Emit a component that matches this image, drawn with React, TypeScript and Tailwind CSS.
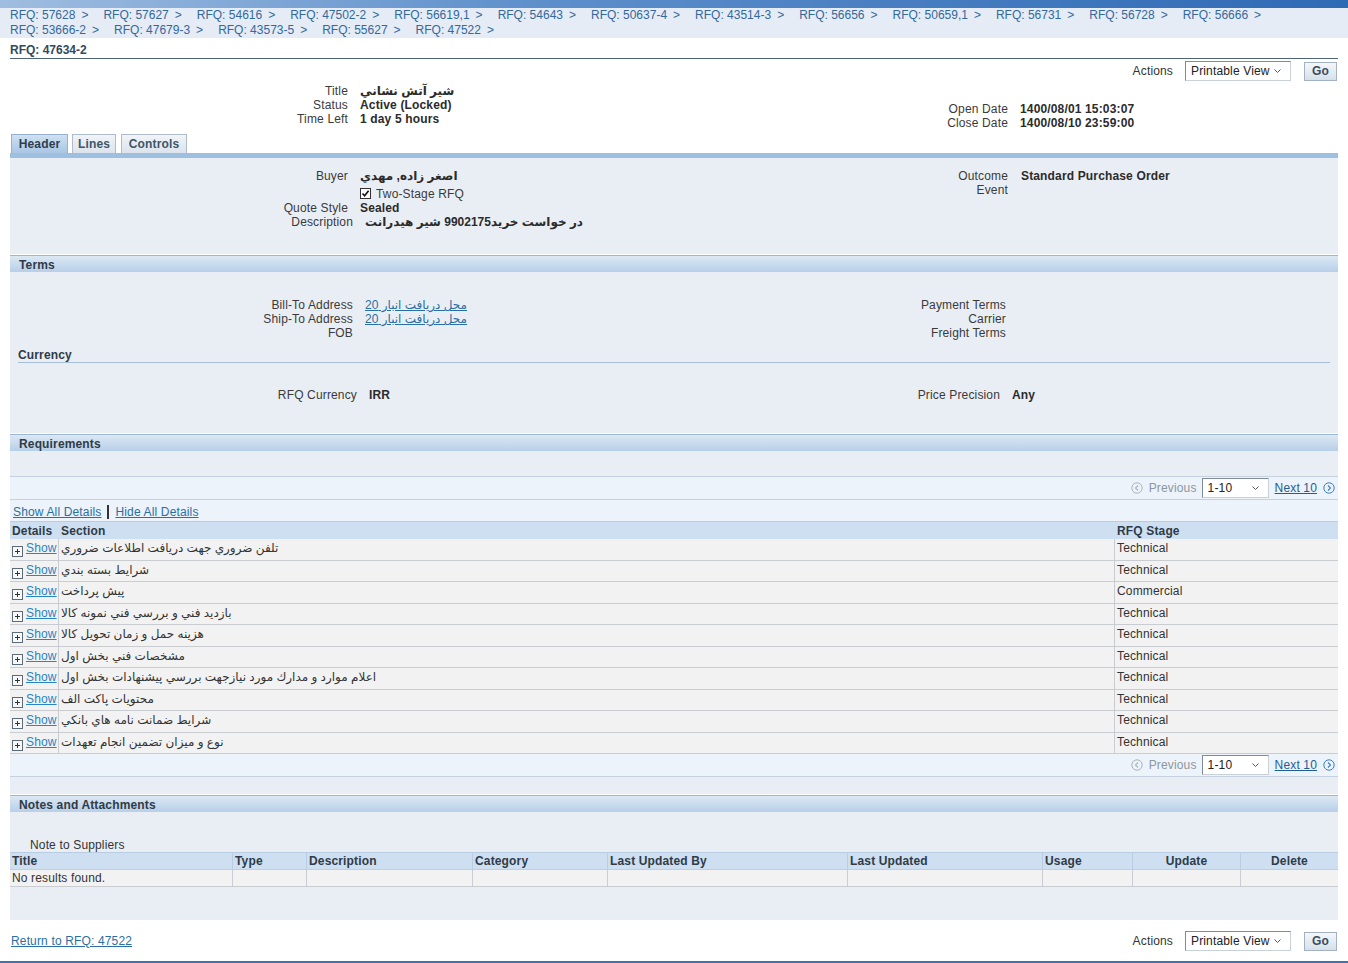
import React from "react";

const crumbs1 = ["RFQ: 57628", "RFQ: 57627", "RFQ: 54616", "RFQ: 47502-2", "RFQ: 56619,1", "RFQ: 54643", "RFQ: 50637-4", "RFQ: 43514-3", "RFQ: 56656", "RFQ: 50659,1", "RFQ: 56731", "RFQ: 56728", "RFQ: 56666"];
const crumbs2 = ["RFQ: 53666-2", "RFQ: 47679-3", "RFQ: 43573-5", "RFQ: 55627", "RFQ: 47522"];

const reqRows: [string, string][] = [
  ["تلفن ضروري جهت دريافت اطلاعات ضروري", "Technical"],
  ["شرايط بسته بندي", "Technical"],
  ["پيش پرداخت", "Commercial"],
  ["بازديد فني و بررسي فني نمونه كالا", "Technical"],
  ["هزينه حمل و زمان تحويل كالا", "Technical"],
  ["مشخصات فني بخش اول", "Technical"],
  ["اعلام موارد و مدارك مورد نيازجهت بررسي پيشنهادات بخش اول", "Technical"],
  ["محتويات پاكت الف", "Technical"],
  ["شرايط ضمانت نامه هاي بانكي", "Technical"],
  ["نوع و ميزان تضمين انجام تعهدات", "Technical"],
];

function Chevron() {
  return (
    <svg width="9" height="6" viewBox="0 0 9 6" className="shrink-0">
      <path d="M1.5 1.5 L4.5 4.5 L7.5 1.5" fill="none" stroke="#555" strokeWidth="1" />
    </svg>
  );
}

function Select({ text, w }: { text: string; w: string }) {
  return (
    <div className={`${w} h-[20px] flex items-center justify-between pl-[5px] pr-[8px] bg-white border border-t-[#7f8b97] border-l-[#7f8b97] border-r-[#c8d0d8] border-b-[#c8d0d8] text-[12px] text-[#222]`}>
      <span>{text}</span>
      <Chevron />
    </div>
  );
}

function Actions() {
  return (
    <div className="flex items-center justify-end pr-[11px] h-[20px]">
      <span className="text-[#333]">Actions</span>
      <div className="ml-[12px]">
        <Select text="Printable View" w="w-[106px]" />
      </div>
      <div className="ml-[13px] w-[33px] h-[19px] flex items-center justify-center border border-[#a3b2c2] bg-[linear-gradient(#f4f7fa,#d6e0ea)] font-bold text-[#3a4c5e]">
        Go
      </div>
    </div>
  );
}

function SectionBar({ title }: { title: string }) {
  return (
    <div className="h-[17px] border-t border-[#9cb7d3] bg-[linear-gradient(#dce8f4,#b7cfe8)] flex items-center pl-[9px] pt-[1px] font-bold text-[#2f3b47]">
      {title}
    </div>
  );
}

function Row({ label, children, lw = "w-[338px]", h = "h-[14px]" }: { label: React.ReactNode; children?: React.ReactNode; lw?: string; h?: string }) {
  return (
    <div className={`flex ${h} items-center`}>
      <div className={`${lw} shrink-0 text-right text-[#3a3a3a]`}>{label}</div>
      <div className="pl-[12px] font-bold text-[#2b2b2b] whitespace-nowrap">{children}</div>
    </div>
  );
}

function PrevIcon({ color }: { color: string }) {
  return (
    <svg width="12" height="12" viewBox="0 0 12 12">
      <circle cx="6" cy="6" r="5.2" fill="none" stroke={color} strokeWidth="1" />
      <path d="M7 3.5 L4.5 6 L7 8.5" fill="none" stroke={color} strokeWidth="1.1" />
    </svg>
  );
}
function NextIcon({ color }: { color: string }) {
  return (
    <svg width="12" height="12" viewBox="0 0 12 12">
      <circle cx="6" cy="6" r="5.2" fill="none" stroke={color} strokeWidth="1" />
      <path d="M5 3.5 L7.5 6 L5 8.5" fill="none" stroke={color} strokeWidth="1.1" />
    </svg>
  );
}

function Pager() {
  return (
    <div className="h-[23px] flex items-center justify-end pr-[3px] bg-[#edf3fa] border-b border-[#c5d1de]">
      <PrevIcon color="#a9b4bf" />
      <span className="ml-[6px] text-[#8e969e]">Previous</span>
      <div className="ml-[5px]">
        <Select text="1-10" w="w-[67px]" />
      </div>
      <span className="ml-[6px] text-[#1f5e96] underline">Next 10</span>
      <span className="ml-[6px]"><NextIcon color="#3f7fc2" /></span>
    </div>
  );
}

function PlusBox() {
  return (
    <svg width="11" height="11" viewBox="0 0 11 11" className="shrink-0 mt-[7px]">
      <rect x="0.5" y="0.5" width="10" height="10" fill="#f6f8fa" stroke="#5d6b78" />
      <path d="M3 5.5 H8 M5.5 3 V8" stroke="#333" strokeWidth="1" />
    </svg>
  );
}

export default function App() {
  return (
    <div className="w-[1348px] h-[963px] bg-white relative overflow-hidden text-[12px] leading-[14px] tracking-[0.15px] text-[#333] font-['Liberation_Sans','DejaVu_Sans',sans-serif]">
      {/* top bar */}
      <div className="h-[8px] bg-[linear-gradient(90deg,#9fbde0,#5d8fcb_40%,#2f6ab5)]" />
      <div className="h-[30px] bg-[#e5ecf5] pl-[10px] font-['Liberation_Sans',sans-serif] tracking-normal text-[#33689c] leading-[15px]">
        <div className="flex h-[15px] items-center">
          {crumbs1.map((c) => (
            <span key={c} className="mr-[15px] whitespace-nowrap">
              {c}
              <span className="ml-[6px]">&gt;</span>
            </span>
          ))}
        </div>
        <div className="flex h-[15px] items-center">
          {crumbs2.map((c) => (
            <span key={c} className="mr-[15px] whitespace-nowrap">
              {c}
              <span className="ml-[6px]">&gt;</span>
            </span>
          ))}
        </div>
      </div>

      <div className="mx-[10px] pt-[5px] pb-[1px] border-b border-[#4f6477] font-bold leading-[14px] tracking-normal text-[#34495d]">
        RFQ: 47634-2
      </div>

      <div className="mt-[2px]">
        <Actions />
      </div>

      {/* title block */}
      <div className="mx-[10px] mt-[3px] grid grid-cols-2 h-[46px]">
        <div>
          <Row label="Title">شير آتش نشاني</Row>
          <Row label="Status">Active (Locked)</Row>
          <Row label="Time Left">1 day 5 hours</Row>
        </div>
        <div className="pt-[18px]">
          <Row label="Open Date" lw="w-[334px]">1400/08/01 15:03:07</Row>
          <Row label="Close Date" lw="w-[334px]">1400/08/10 23:59:00</Row>
        </div>
      </div>

      {/* tabs */}
      <div className="mx-[10px] mt-[4px] flex items-end h-[19px] pl-[1px]">
        <div className="h-[19px] w-[57px] flex items-center justify-center font-bold text-[#2e3e4f] bg-[linear-gradient(#cfe0f1,#a9c6e3)] border border-b-0 border-[#94b3d2]">Header</div>
        <div className="ml-[4px] h-[19px] w-[44px] flex items-center justify-center font-bold text-[#405568] bg-[linear-gradient(#f1f4f8,#dbe3ec)] border border-b-0 border-[#aebccb]">Lines</div>
        <div className="ml-[5px] h-[19px] w-[66px] flex items-center justify-center font-bold text-[#405568] bg-[linear-gradient(#f1f4f8,#dbe3ec)] border border-b-0 border-[#aebccb]">Controls</div>
      </div>
      <div className="mx-[10px] h-[5px] bg-[#9dbfe0]" />

      {/* header panel */}
      <div className="mx-[10px] bg-[#e9eef5] pt-[11px] pb-[25px] grid grid-cols-2">
        <div>
          <Row label="Buyer">اصغر زاده, مهدي</Row>
          <div className="flex h-[18px] items-center pt-[3px]">
            <div className="w-[338px] shrink-0" />
            <div className="pl-[12px] flex items-center">
              <span className="w-[11px] h-[11px] border border-[#333] bg-white flex items-center justify-center">
                <svg width="9" height="9" viewBox="0 0 9 9"><path d="M1.5 4.5 L3.6 6.8 L7.6 1.8" fill="none" stroke="#111" strokeWidth="1.6" /></svg>
              </span>
              <span className="ml-[5px] text-[#3a3a3a]">Two-Stage RFQ</span>
            </div>
          </div>
          <Row label="Quote Style">Sealed</Row>
          <Row label="Description" lw="w-[343px]">در خواست خريد9902175 شير هيدرانت</Row>
        </div>
        <div>
          <div className="flex">
            <div className="w-[334px] shrink-0 text-right text-[#3a3a3a] leading-[14px]">Outcome<br />Event</div>
            <div className="pl-[13px] font-bold text-[#2b2b2b]">Standard Purchase Order</div>
          </div>
        </div>
      </div>

      {/* terms */}
      <div className="mx-[10px] mt-[1px]">
        <SectionBar title="Terms" />
      </div>
      <div className="mx-[10px] bg-[#e9eef5] pt-[26px] pb-[31px]">
        <div className="grid grid-cols-2">
          <div>
            {["Bill-To Address", "Ship-To Address"].map((l) => (
              <Row key={l} label={l} lw="w-[343px]">
                <span className="font-normal text-[#2a6fa3] underline">محل دريافت انبار 20</span>
              </Row>
            ))}
            <Row label="FOB" lw="w-[343px]"></Row>
          </div>
          <div>
            <Row label="Payment Terms" lw="w-[332px]"></Row>
            <Row label="Carrier" lw="w-[332px]"></Row>
            <Row label="Freight Terms" lw="w-[332px]"></Row>
          </div>
        </div>
        <div className="mx-[8px] mt-[8px] h-[15px] border-b border-[#a9bfd6] font-bold text-[#2f3b47] leading-[14px]">Currency</div>
        <div className="mt-[25px] grid grid-cols-2">
          <Row label="RFQ Currency" lw="w-[347px]">IRR</Row>
          <Row label="Price Precision" lw="w-[326px]">Any</Row>
        </div>
      </div>

      {/* requirements */}
      <div className="mx-[10px] mt-[1px]">
        <SectionBar title="Requirements" />
      </div>
      <div className="mx-[10px] bg-[#e9eef5] pt-[25px] pb-[17px]">
        <div className="border-t border-[#c5d1de] bg-[#edf3fa]">
          <Pager />
          <div className="h-[21px] flex items-center pl-[3px] pt-[3px]">
            <span className="text-[#2a6fa3] underline">Show All Details</span>
            <span className="mx-[6px] w-[2px] h-[14px] bg-[#333]" />
            <span className="text-[#2a6fa3] underline">Hide All Details</span>
          </div>
          <div className="flex h-[18px] items-center bg-[#cddff0] border-t border-[#b9cde2] font-bold text-[#2f3b47]">
            <div className="w-[49px] pl-[2px]">Details</div>
            <div className="flex-1 pl-[2px]">Section</div>
            <div className="w-[223px] pl-[2px]">RFQ Stage</div>
          </div>
          {reqRows.map(([s, st], i) => (
            <div key={i} className="flex h-[21.5px] bg-[#f2f2f2] border-b border-[#c9cdd2]">
              <div className="w-[49px] border-r border-[#c9cdd2] flex items-start pl-[2px]">
                <PlusBox />
                <span className="ml-[3px] text-[#2a84c4] underline mt-[2px]">Show</span>
              </div>
              <div className="flex-1 border-r border-[#c9cdd2] pl-[2px] pt-[2px]">
                <span className="whitespace-nowrap text-[#333] tracking-normal">{s}</span>
              </div>
              <div className="w-[223px] pl-[2px] pt-[2px] text-[#333]">{st}</div>
            </div>
          ))}
          <Pager />
        </div>
      </div>

      {/* notes */}
      <div className="mx-[10px] mt-[1px]">
        <SectionBar title="Notes and Attachments" />
      </div>
      <div className="mx-[10px] bg-[#e9eef5] pt-[26px] pb-[33px]">
        <div className="pl-[20px] h-[14px] leading-[14px] text-[#333]">Note to Suppliers</div>
        <div className="flex h-[17px] items-center bg-[#cddff0] border-t border-[#b9cde2] font-bold text-[#2f3b47]">
          <div className="w-[223px] pl-[2px] border-r border-[#b9cde2] h-full flex items-center">Title</div>
          <div className="w-[74px] pl-[2px] border-r border-[#b9cde2] h-full flex items-center">Type</div>
          <div className="w-[166px] pl-[2px] border-r border-[#b9cde2] h-full flex items-center">Description</div>
          <div className="w-[135px] pl-[2px] border-r border-[#b9cde2] h-full flex items-center">Category</div>
          <div className="w-[240px] pl-[2px] border-r border-[#b9cde2] h-full flex items-center">Last Updated By</div>
          <div className="w-[195px] pl-[2px] border-r border-[#b9cde2] h-full flex items-center">Last Updated</div>
          <div className="w-[90px] pl-[2px] border-r border-[#b9cde2] h-full flex items-center">Usage</div>
          <div className="w-[108px] border-r border-[#b9cde2] h-full flex items-center justify-center">Update</div>
          <div className="flex-1 h-full flex items-center justify-center">Delete</div>
        </div>
        <div className="flex h-[18px] bg-[#f2f2f2] border-t border-b border-[#c9cdd2]">
          <div className="w-[223px] pl-[2px] border-r border-[#c9cdd2] flex items-center">No results found.</div>
          <div className="w-[74px] border-r border-[#c9cdd2]" />
          <div className="w-[166px] border-r border-[#c9cdd2]" />
          <div className="w-[135px] border-r border-[#c9cdd2]" />
          <div className="w-[240px] border-r border-[#c9cdd2]" />
          <div className="w-[195px] border-r border-[#c9cdd2]" />
          <div className="w-[90px] border-r border-[#c9cdd2]" />
          <div className="w-[108px] border-r border-[#c9cdd2]" />
          <div className="flex-1" />
        </div>
      </div>

      {/* bottom */}
      <div className="mt-[10px] flex items-center justify-between pl-[11px] h-[22px]">
        <span className="text-[#2a6fa3] underline">Return to RFQ: 47522</span>
        <Actions />
      </div>
      <div className="absolute left-0 right-0 top-[961px] h-[2px] bg-[#3d72b5]" />
    </div>
  );
}
